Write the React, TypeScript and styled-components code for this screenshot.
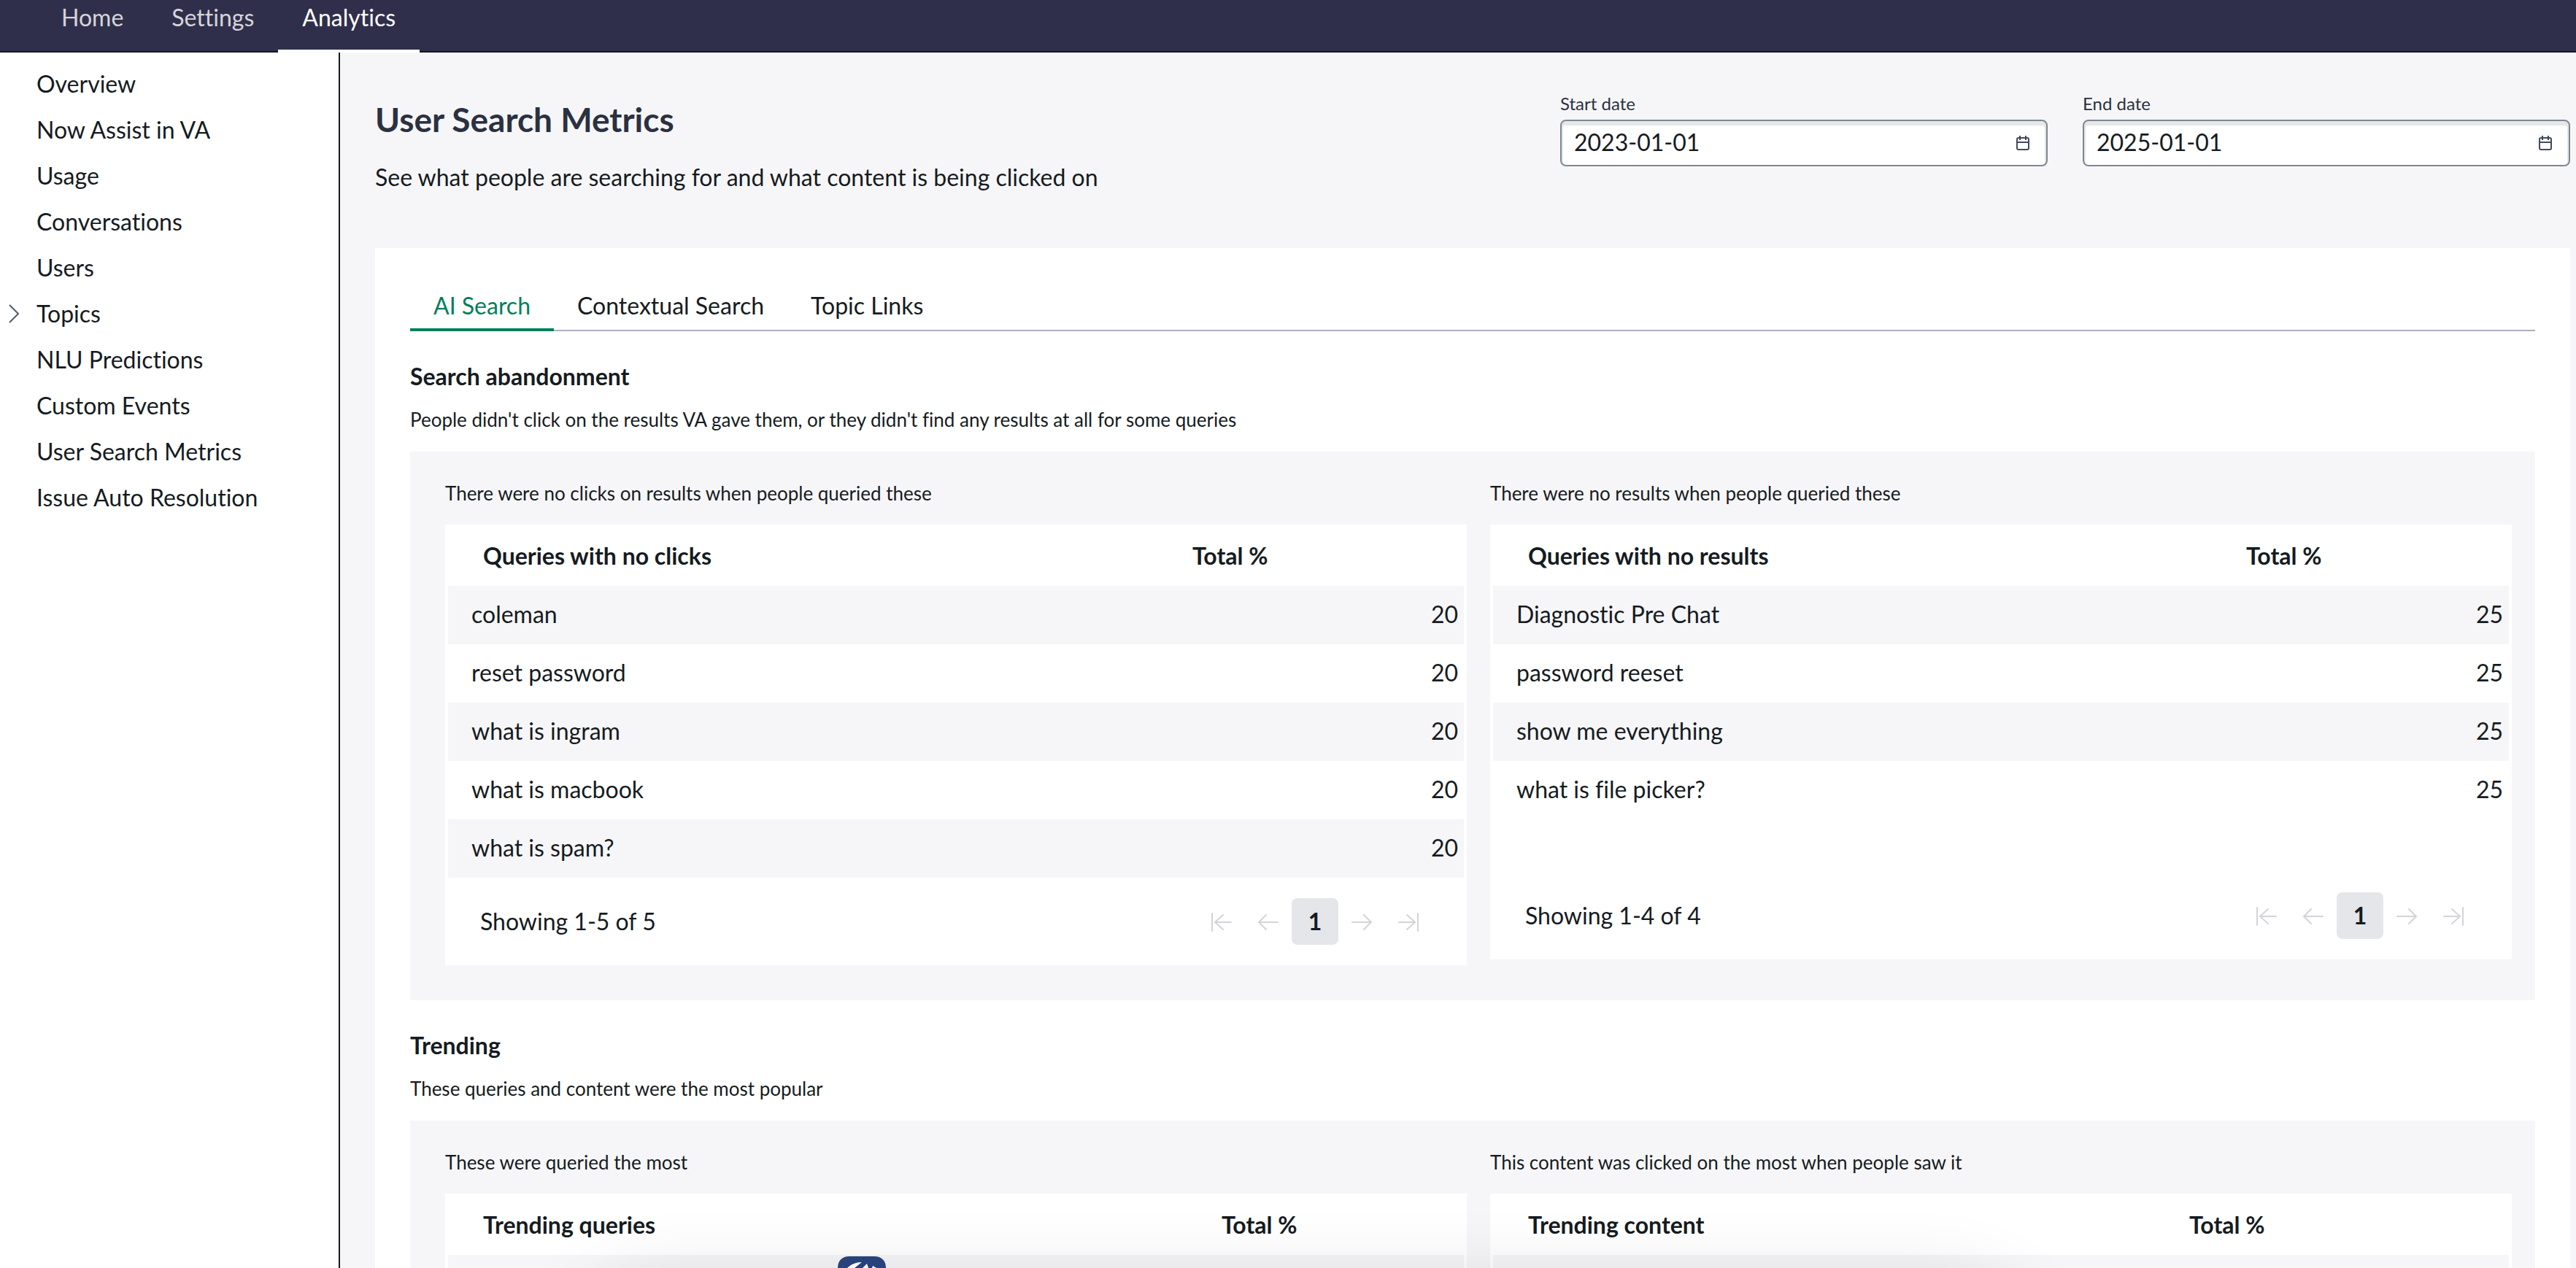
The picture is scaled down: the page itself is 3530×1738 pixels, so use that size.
import React, { useState } from "react";
import styled, { createGlobalStyle } from "styled-components";

const ink = "#161b21";
const surface = "#f6f6f8";
const green = "#007f5b";

const GlobalStyle = createGlobalStyle`
  *, *::before, *::after { box-sizing: border-box; }
  html, body { margin: 0; height: 100%; }
  #root { height: 100%; }
  body {
    background: ${surface};
    color: ${ink};
    font-family: Lato, "Open Sans", sans-serif;
    font-size: 32px;
    line-height: 40px;
    font-variant-ligatures: none;
    overflow: hidden;
  }
  h1, h2, p, ul { margin: 0; padding: 0; }
  button, input { font: inherit; color: inherit; }
`;

const Page = styled.div`
  display: flex;
  flex-direction: column;
  min-height: 100%;
`;

const TopBar = styled.nav`
  display: flex;
  flex: none;
  height: 72px;
  padding-left: 51px;
  background: #302f4b;
  border-bottom: 2px solid #181a20;
`;

const TopLink = styled.a<{ $active?: boolean }>`
  height: 72px;
  padding: 4px 33px 0;
  color: ${(p) => (p.$active ? "#ffffff" : "#d5d5da")};
  text-decoration: none;
  border-bottom: 4px solid ${(p) => (p.$active ? "#ffffff" : "transparent")};
`;

const Body = styled.div`
  display: flex;
  flex: 1;
  align-items: stretch;
`;

const Sidebar = styled.nav`
  flex: none;
  width: 466px;
  padding-top: 12px;
  background: #ffffff;
  border-right: 2px solid #181a20;
`;

const SideList = styled.ul`
  list-style: none;
`;

const SideItem = styled.li`
  display: flex;
  align-items: center;
  height: 63px;
  padding-bottom: 2px;
`;

const SideIcon = styled.span`
  display: flex;
  flex: none;
  justify-content: center;
  width: 50px;
  padding-right: 12px;
`;

const SideLink = styled.a`
  color: ${ink};
  text-decoration: none;
`;

const Main = styled.main`
  flex: 1;
  min-width: 0;
  padding: 56px 8px 0 48px;
`;

const PageHead = styled.header`
  display: flex;
  justify-content: space-between;
  height: 212px;
`;

const Title = styled.h1`
  margin-top: 4px;
  color: #2b3140;
  font-size: 46px;
  line-height: 64px;
  font-weight: 700;
`;

const Subtitle = styled.p`
  margin-top: 27px;
`;

const Dates = styled.div`
  display: grid;
  grid-template-columns: 668px 668px;
  gap: 48px;
`;

const Field = styled.label`
  display: flex;
  flex-direction: column;
  color: #2b3140;
  font-size: 24px;
  line-height: 28px;
`;

const FieldBox = styled.span`
  display: flex;
  align-items: center;
  height: 64px;
  margin-top: 8px;
  padding: 0 23px 0 17px;
  background: #ffffff;
  border: 2px solid #7d8795;
  border-radius: 8px;
  box-shadow: inset 0 4px 0 2px #e5e8e7;
`;

const DateInput = styled.input`
  flex: 1;
  min-width: 0;
  padding: 0 0 2px;
  border: 0;
  outline: 0;
  background: transparent;
  color: ${ink};
  font-size: 32px;
  line-height: 40px;
`;

const Card = styled.div`
  padding: 48px 48px 0;
  background: #ffffff;
`;

const Tabs = styled.div`
  display: flex;
  height: 66px;
  border-bottom: 2px solid #adb1be;
`;

const Tab = styled.button<{ $active: boolean }>`
  height: 66px;
  padding: 0 32px;
  background: none;
  border: 0;
  border-bottom: 4px solid ${(p) => (p.$active ? green : "transparent")};
  color: ${(p) => (p.$active ? green : ink)};
  cursor: pointer;
`;

const Section = styled.section`
  padding-top: 42px;
`;

const SectionTitle = styled.h2`
  font-size: 32px;
  line-height: 40px;
  font-weight: 700;
`;

const Note = styled.p`
  font-size: 26px;
  line-height: 32px;
`;

const SectionNote = styled(Note)`
  margin: 23px 0 28px;
`;

const Panel = styled.div`
  display: grid;
  grid-template-columns: 1fr 1fr;
  gap: 32px;
  padding: 41px 32px 48px 48px;
  background: ${surface};
`;

const TableCard = styled.div`
  margin-top: 27px;
  padding: 0 4px;
  background: #ffffff;
`;

const Table = styled.table`
  width: 100%;
  border-collapse: collapse;
  table-layout: fixed;
`;

const ValueCol = styled.col<{ $width: number }>`
  width: ${(p) => p.$width}px;
`;

const HeadCell = styled.th`
  height: 84px;
  padding: 1px 48px 0;
  text-align: left;
  font-weight: 700;
`;

const Row = styled.tr`
  &:nth-child(odd) { background: ${surface}; }
`;

const Cell = styled.td<{ $numeric?: boolean }>`
  height: 80px;
  padding: 0 8px 2px 32px;
  text-align: ${(p) => (p.$numeric ? "right" : "left")};
`;

const Footer = styled.div<{ $spaced?: boolean }>`
  display: flex;
  align-items: center;
  justify-content: space-between;
  margin-top: ${(p) => (p.$spaced ? 72 : 0)}px;
  padding: 28px 44px;
`;

const Pager = styled.div`
  display: flex;
`;

const PageButton = styled.button<{ $current?: boolean }>`
  display: flex;
  align-items: center;
  justify-content: center;
  width: 64px;
  height: 64px;
  padding: 0;
  border: 0;
  border-radius: 8px;
  background: ${(p) => (p.$current ? "#e4e6ea" : "transparent")};
  color: ${(p) => (p.$current ? ink : "#d3d4d9")};
  font-weight: 700;
`;

const DockShade = styled.div`
  position: fixed;
  left: 820px;
  right: 780px;
  bottom: -640px;
  height: 600px;
  border-radius: 60px;
  box-shadow: 0 0 120px rgba(0, 0, 0, 0.2);
  pointer-events: none;
`;

const DockIcon = styled.svg`
  position: fixed;
  left: 1148px;
  bottom: 0;
  display: block;
`;

const stroke = { fill: "none", stroke: "currentColor", strokeWidth: 2, strokeLinecap: "round" as const };

const ARROWS = {
  first: "M3 5v24M29 17H7M18 7L7 17l11 10",
  prev: "M29 17H3M13 7L3 17l10 10",
  next: "M3 17h26M19 7l10 10-10 10",
  last: "M29 5v24M3 17h22M14 7l11 10-11 10",
};

function Arrow({ kind }: { kind: keyof typeof ARROWS }) {
  return (
    <svg width="32" height="32" viewBox="0 0 32 32" {...stroke}>
      <path d={ARROWS[kind]} />
    </svg>
  );
}

function CalendarIcon() {
  return (
    <svg width="18" height="20" viewBox="0 0 18 20" fill="none" stroke="#434a5a" strokeWidth="2">
      <rect x="1" y="3" width="16" height="16" rx="2" />
      <path d="M1 9h16M5 0v6M13 0v6" />
    </svg>
  );
}

type Item = { label: string; value: number };
type TableData = {
  note: string;
  name: string;
  valueWidth: number;
  rows: Item[];
  spaced?: boolean;
};

const SIDE_ITEMS = [
  "Overview",
  "Now Assist in VA",
  "Usage",
  "Conversations",
  "Users",
  "Topics",
  "NLU Predictions",
  "Custom Events",
  "User Search Metrics",
  "Issue Auto Resolution",
];

const TAB_NAMES = ["AI Search", "Contextual Search", "Topic Links"];

const SECTIONS: { title: string; note: string; tables: TableData[] }[] = [
  {
    title: "Search abandonment",
    note: "People didn't click on the results VA gave them, or they didn't find any results at all for some queries",
    tables: [
      {
        note: "There were no clicks on results when people queried these",
        name: "Queries with no clicks",
        valueWidth: 420,
        rows: ["coleman", "reset password", "what is ingram", "what is macbook", "what is spam?"].map(
          (label) => ({ label, value: 20 })
        ),
      },
      {
        note: "There were no results when people queried these",
        name: "Queries with no results",
        valueWidth: 408,
        spaced: true,
        rows: ["Diagnostic Pre Chat", "password reeset", "show me everything", "what is file picker?"].map(
          (label) => ({ label, value: 25 })
        ),
      },
    ],
  },
  {
    title: "Trending",
    note: "These queries and content were the most popular",
    tables: [
      { note: "These were queried the most", name: "Trending queries", valueWidth: 380, rows: [] },
      {
        note: "This content was clicked on the most when people saw it",
        name: "Trending content",
        valueWidth: 486,
        rows: [],
      },
    ],
  },
];

function MetricTable({ data }: { data: TableData }) {
  const count = data.rows.length;
  return (
    <div>
      <Note>{data.note}</Note>
      <TableCard>
        <Table>
          <colgroup>
            <col />
            <ValueCol $width={data.valueWidth} />
          </colgroup>
          <thead>
            <tr>
              <HeadCell scope="col">{data.name}</HeadCell>
              <HeadCell scope="col">Total %</HeadCell>
            </tr>
          </thead>
          <tbody>
            {data.rows.map((row) => (
              <Row key={row.label}>
                <Cell>{row.label}</Cell>
                <Cell $numeric>{row.value}</Cell>
              </Row>
            ))}
            {count === 0 && (
              <Row>
                <Cell colSpan={2} />
              </Row>
            )}
          </tbody>
        </Table>
        {count > 0 && (
          <Footer $spaced={data.spaced}>
            <span>{`Showing 1-${count} of ${count}`}</span>
            <Pager>
              <PageButton disabled aria-label="First page"><Arrow kind="first" /></PageButton>
              <PageButton disabled aria-label="Previous page"><Arrow kind="prev" /></PageButton>
              <PageButton $current>1</PageButton>
              <PageButton disabled aria-label="Next page"><Arrow kind="next" /></PageButton>
              <PageButton disabled aria-label="Last page"><Arrow kind="last" /></PageButton>
            </Pager>
          </Footer>
        )}
      </TableCard>
    </div>
  );
}

function DateField({ label, initial }: { label: string; initial: string }) {
  const [value, setValue] = useState(initial);
  return (
    <Field>
      {label}
      <FieldBox>
        <DateInput type="text" value={value} onChange={(e) => setValue(e.target.value)} />
        <CalendarIcon />
      </FieldBox>
    </Field>
  );
}

export default function App() {
  const [tab, setTab] = useState(TAB_NAMES[0]);
  return (
    <Page>
      <GlobalStyle />
      <TopBar aria-label="Primary">
        <TopLink href="#home">Home</TopLink>
        <TopLink href="#settings">Settings</TopLink>
        <TopLink href="#analytics" $active>Analytics</TopLink>
      </TopBar>
      <Body>
        <Sidebar aria-label="Analytics">
          <SideList>
            {SIDE_ITEMS.map((name) => (
              <SideItem key={name}>
                <SideIcon>
                  {name === "Topics" && (
                    <svg width="16" height="26" viewBox="0 0 16 26" fill="none" stroke="#525a68" strokeWidth="2">
                      <path d="M2 1l12 12L2 25" />
                    </svg>
                  )}
                </SideIcon>
                <SideLink href="#analytics">{name}</SideLink>
              </SideItem>
            ))}
          </SideList>
        </Sidebar>
        <Main>
          <PageHead>
            <div>
              <Title>User Search Metrics</Title>
              <Subtitle>See what people are searching for and what content is being clicked on</Subtitle>
            </div>
            <Dates>
              <DateField label="Start date" initial="2023-01-01" />
              <DateField label="End date" initial="2025-01-01" />
            </Dates>
          </PageHead>
          <Card>
            <Tabs role="tablist">
              {TAB_NAMES.map((name) => (
                <Tab
                  key={name}
                  role="tab"
                  aria-selected={tab === name}
                  $active={tab === name}
                  onClick={() => setTab(name)}
                >
                  {name}
                </Tab>
              ))}
            </Tabs>
            {SECTIONS.map((section) => (
              <Section key={section.title}>
                <SectionTitle>{section.title}</SectionTitle>
                <SectionNote>{section.note}</SectionNote>
                <Panel>
                  {section.tables.map((data) => (
                    <MetricTable key={data.name} data={data} />
                  ))}
                </Panel>
              </Section>
            ))}
          </Card>
        </Main>
      </Body>
      <DockShade />
      <DockIcon width="66" height="16" viewBox="0 0 66 16" aria-hidden="true">
        <path d="M0 16C0 6 6 0 16 0h34c10 0 16 6 16 16z" fill="#28427c" />
        <path d="M13 16C18 11 25 8 33 8l-5 4-5 4zM34 16l6-6 2 6zM47 16l1-3 5 3z" fill="#ffffff" />
      </DockIcon>
    </Page>
  );
}
